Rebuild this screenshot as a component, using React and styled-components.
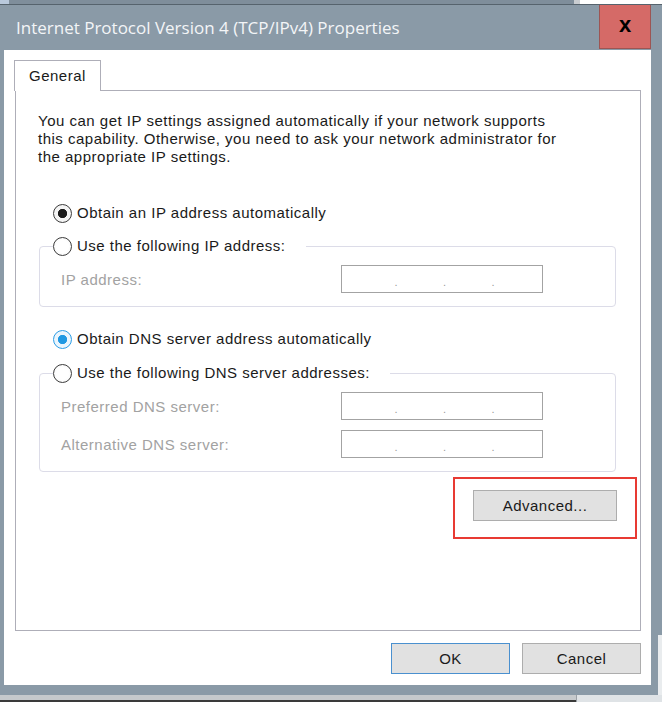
import React from 'react';
import styled, { createGlobalStyle } from 'styled-components';

const GlobalStyle = createGlobalStyle`
  html, body {
    margin: 0;
    padding: 0;
    background: #dfe3e6;
  }
  * {
    box-sizing: border-box;
  }
`;

const IpField = () => (
  <FieldBox>
    <Segment />
    <Dot>.</Dot>
    <Segment />
    <Dot>.</Dot>
    <Segment />
    <Dot>.</Dot>
    <Segment />
  </FieldBox>
);

const Radio = ({ checked, focused, children }) => (
  <RadioLabel>
    <RadioCircle $checked={checked} $focused={focused} />
    <span>{children}</span>
  </RadioLabel>
);

const App = () => {
  return (
    <Screen>
      <GlobalStyle />
      <BackdropBar>
        <BackdropIcon />
        <BackdropGap />
        <BackdropTab />
      </BackdropBar>
      <Stage>
        <Window>
          <TitleBar>
            <Title>Internet Protocol Version 4 (TCP/IPv4) Properties</Title>
            <CloseButton>x</CloseButton>
          </TitleBar>
          <Client>
            <TabStrip>
              <Tab>General</Tab>
            </TabStrip>
            <Panel>
              <Intro>
                You can get IP settings assigned automatically if your network supports
                <br />
                this capability. Otherwise, you need to ask your network administrator for
                <br />
                the appropriate IP settings.
              </Intro>

              <RadioRow $top={37}>
                <Radio checked>Obtain an IP address automatically</Radio>
              </RadioRow>
              <Group $top={13}>
                <Legend>
                  <Radio>Use the following IP address:</Radio>
                </Legend>
                <FieldRow>
                  <FieldLabel>IP address:</FieldLabel>
                  <IpField />
                </FieldRow>
              </Group>

              <RadioRow $top={22}>
                <Radio checked focused>
                  Obtain DNS server address automatically
                </Radio>
              </RadioRow>
              <Group $top={14}>
                <Legend>
                  <Radio>Use the following DNS server addresses:</Radio>
                </Legend>
                <FieldRow>
                  <FieldLabel>Preferred DNS server:</FieldLabel>
                  <IpField />
                </FieldRow>
                <FieldRow>
                  <FieldLabel>Alternative DNS server:</FieldLabel>
                  <IpField />
                </FieldRow>
              </Group>

              <ActionRow>
                <Highlight>
                  <Button $width={144}>Advanced...</Button>
                </Highlight>
              </ActionRow>
            </Panel>
            <Footer>
              <Button $width={119} $primary>
                OK
              </Button>
              <Button $width={119}>Cancel</Button>
            </Footer>
          </Client>
        </Window>
        <BackdropSide />
      </Stage>
      <BackdropBottom>
        <BackdropTaskbar />
      </BackdropBottom>
    </Screen>
  );
};

export default App;

const Screen = styled.div`
  width: 662px;
  height: 702px;
  display: flex;
  flex-direction: column;
  overflow: hidden;
  font-family: 'Liberation Sans', Arial, sans-serif;
  letter-spacing: 0.5px;
`;

const BackdropBar = styled.div`
  height: 4px;
  display: flex;
  background: #7f8e9b;
  overflow: hidden;
`;

const BackdropIcon = styled.div`
  width: 9px;
  background: #b9c9dc;
`;

const BackdropGap = styled.div`
  flex: 1;
`;

const BackdropTab = styled.div`
  width: 88px;
  background: #ffffff;
  border-left: 6px solid #c9cdd1;
`;

const Stage = styled.div`
  display: flex;
  flex: 1;
`;

const Window = styled.div`
  width: 658px;
  display: flex;
  flex-direction: column;
  background: #8a9aa7;
  border-top: 1px solid #56636d;
`;

const BackdropSide = styled.div`
  flex: 1;
  border-top: 1px solid #56636d;
  background: linear-gradient(#8a9aa7 0 630px, #e9ecee 630px);
`;

const TitleBar = styled.div`
  height: 45px;
  display: flex;
  align-items: flex-start;
  padding-right: 7px;
`;

const Title = styled.div`
  flex: 1;
  padding: 13px 0 0 16px;
  font-family: 'Open Sans', 'Noto Sans', sans-serif;
  font-size: 17px;
  line-height: 20px;
  letter-spacing: 0;
  color: #f3f5f7;
  white-space: nowrap;
`;

const CloseButton = styled.div`
  width: 52px;
  height: 44px;
  background: #d56a67;
  border: 1px solid #9c5553;
  border-top: none;
  display: flex;
  align-items: center;
  justify-content: center;
  padding-bottom: 4px;
  font-family: 'Liberation Sans', Arial, sans-serif;
  font-weight: 700;
  font-size: 22px;
  letter-spacing: 0;
  color: #000;
`;

const Client = styled.div`
  height: 635px;
  margin: 0 7px 10px 4px;
  background: #ffffff;
  display: flex;
  flex-direction: column;
  padding: 10px 10px 11px 11px;
`;

const TabStrip = styled.div`
  display: flex;
  height: 30px;
  position: relative;
  z-index: 1;
`;

const Tab = styled.div`
  height: 31px;
  padding: 0 14px;
  margin-left: -1px;
  background: #ffffff;
  border: 1px solid #aeaeb8;
  border-bottom: none;
  font-size: 15px;
  line-height: 30px;
  color: #1a1a1a;
`;

const Panel = styled.div`
  flex: 1;
  border: 1px solid #aeaeb8;
  padding: 21px 23px 0 22px;
  display: flex;
  flex-direction: column;
`;

const Intro = styled.p`
  margin: 0;
  font-size: 15px;
  line-height: 18px;
  color: #1a1a1a;
  white-space: nowrap;
`;

const RadioRow = styled.div`
  margin-top: ${(p) => p.$top}px;
  padding-left: 15px;
  height: 20px;
  display: flex;
  align-items: center;
`;

const RadioLabel = styled.label`
  display: flex;
  align-items: center;
  gap: 5px;
  font-size: 15px;
  line-height: 20px;
  color: #1a1a1a;
  white-space: nowrap;
`;

const RadioCircle = styled.span`
  width: 19px;
  height: 19px;
  border-radius: 50%;
  flex-shrink: 0;
  border: 1px solid ${(p) => (p.$focused ? '#2b9de6' : '#3c3c3c')};
  background: ${(p) =>
    p.$checked
      ? `radial-gradient(circle, ${p.$focused ? '#1f98e2' : '#1a1a1a'} 0 4.3px, ${
          p.$focused ? '#eaf5fd' : '#f4f4f4'
        } 5px)`
      : 'radial-gradient(circle, #ffffff 0 50%, #f0f0f0 100%)'};
`;

const Group = styled.fieldset`
  margin: ${(p) => p.$top}px 1px 0 1px;
  padding: 9px 72px 13px 21px;
  border: 1px solid #dcdce8;
  border-radius: 4px;
  min-width: 0;
  display: flex;
  flex-direction: column;
  gap: 10px;
`;

const Legend = styled.legend`
  margin-left: -8px;
  padding: 0 20px 0 0;
  height: 20px;
`;

const FieldRow = styled.div`
  display: flex;
  align-items: center;
  justify-content: space-between;
  height: 28px;
`;

const FieldLabel = styled.span`
  font-size: 15px;
  color: #a2a2a2;
  white-space: nowrap;
`;

const FieldBox = styled.div`
  width: 202px;
  height: 28px;
  border: 1px solid #a3a3a3;
  background: #ffffff;
  display: flex;
  align-items: center;
  padding: 0 2px 0 6px;
`;

const Segment = styled.span`
  flex: 1;
`;

const Dot = styled.span`
  width: 2px;
  font-size: 11px;
  line-height: 10px;
  color: #9a9a9a;
  margin-top: 6px;
`;

const ActionRow = styled.div`
  margin: 5px -20px 0 0;
  display: flex;
  justify-content: flex-end;
`;

const Highlight = styled.div`
  border: 2px solid #e83a33;
  padding: 11px 18px 16px 18px;
`;

const Button = styled.div`
  width: ${(p) => p.$width}px;
  height: 31px;
  background: #e1e1e1;
  border: 1px solid ${(p) => (p.$primary ? '#4a90cf' : '#adadad')};
  display: flex;
  align-items: center;
  justify-content: center;
  font-size: 15px;
  color: #1a1a1a;
`;

const Footer = styled.div`
  display: flex;
  justify-content: flex-end;
  gap: 12px;
  padding-top: 12px;
`;

const BackdropBottom = styled.div`
  height: 7px;
  display: flex;
  flex-direction: column;
`;

const BackdropTaskbar = styled.div`
  flex: 1;
  width: 577px;
  background: linear-gradient(#c5c9cc 0 70%, #3a3a3a 70%);
  border-right: 1px solid #9aa0a5;
`;
